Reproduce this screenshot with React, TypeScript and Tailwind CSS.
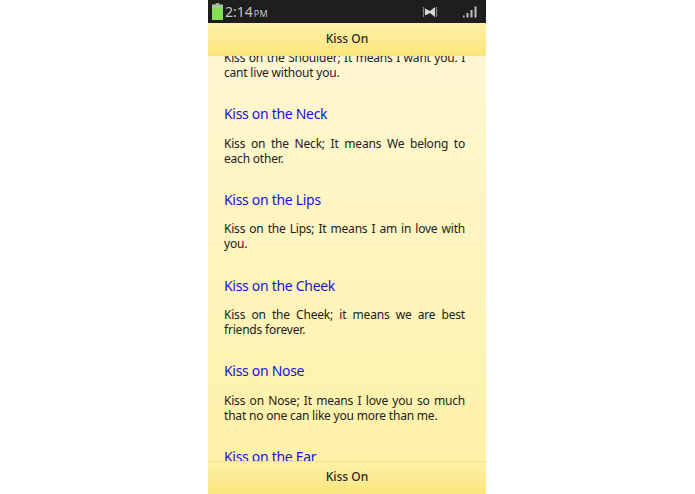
const items = [
  { title: "Kiss on the Neck", body: "Kiss on the Neck; It means We belong to each other." },
  { title: "Kiss on the Lips", body: "Kiss on the Lips; It means I am in love with you." },
  { title: "Kiss on the Cheek", body: "Kiss on the Cheek; it means we are best friends forever." },
  { title: "Kiss on Nose", body: "Kiss on Nose; It means I love you so much that no one can like you more than me." },
  { title: "Kiss on the Ear", body: "Kiss on the Ear; It means you are my world." },
];

function StatusBar() {
  return (
    <div className="flex h-[23px] shrink-0 items-center bg-[#1e1e1e] pl-[4px] pr-[9px] text-[#c4c4c4]">
      <svg width="11" height="17" viewBox="0 0 11 17" aria-hidden="true">
        <rect x="3.5" y="0" width="4" height="2" fill="#9aa894" />
        <rect x="0" y="1.5" width="11" height="4" fill="#a9c79a" />
        <rect x="0" y="5" width="11" height="12" fill="#86de52" />
      </svg>
      <span className="ml-[2px] text-[14px] leading-none">2:14</span>
      <span className="ml-[1px] mt-[3px] text-[9px] leading-none tracking-[0.2px]">PM</span>
      <svg className="ml-auto" width="16" height="14" viewBox="0 0 16 14" aria-hidden="true">
        <path d="M3 3.5l5 2.5 5-4v10L8 8l-5 2.5z" fill="#d8d8d8" />
        <path d="M1 2l1 2-1 2 1 2-1 2 1 2M15 2l-1 2 1 2-1 2 1 2-1 2" stroke="#a8a8a8" strokeWidth="0.9" fill="none" />
      </svg>
      <svg className="ml-[25px]" width="14" height="12" viewBox="0 0 14 12" aria-hidden="true">
        <rect x="0" y="9.5" width="1.6" height="2" fill="#bdbdbd" />
        <rect x="3.5" y="7" width="2" height="4.5" fill="#bdbdbd" />
        <rect x="7.5" y="4" width="2" height="7.5" fill="#bdbdbd" />
        <rect x="11.5" y="0.5" width="2" height="11" fill="#bdbdbd" />
      </svg>
    </div>
  );
}

export default function App() {
  return (
    <div className="flex h-[494px] w-[695px] overflow-hidden bg-white pl-[208px] font-['Noto_Sans',sans-serif]">
      <div className="flex h-full w-[278px] flex-col">
        <StatusBar />
        <div className="flex h-[33px] shrink-0 items-center justify-center bg-gradient-to-b from-[#fdf0a8] to-[#fbe67c] pb-[1px] text-[12px] font-medium text-[#2a2a2a]">
          Kiss On
        </div>
        <div className="min-h-0 flex-1 overflow-hidden bg-gradient-to-b from-[#fff7d2] to-[#fef1a8] pl-[16px] pr-[21px]">
          <p className="-mt-[6px] text-justify text-[12px] leading-[15px] tracking-[-0.2px] text-[#222]">
            Kiss on the Shoulder; It means I want you. I cant live without you.
          </p>
          {items.map((item) => (
            <div key={item.title} className="mt-[24.4px]">
              <h2 className="mb-[11.3px] text-[14px] leading-[20px] tracking-[-0.3px] text-[#1414d8]">{item.title}</h2>
              <p className="text-justify text-[12px] leading-[15px] tracking-[-0.2px] text-[#222]">{item.body}</p>
            </div>
          ))}
        </div>
        <div className="flex h-[33px] shrink-0 items-center justify-center border-t border-[#f3e08c] bg-gradient-to-b from-[#fdf0a8] to-[#fbe67c] pb-[2px] text-[12px] font-medium text-[#2a2a2a]">
          Kiss On
        </div>
      </div>
    </div>
  );
}
